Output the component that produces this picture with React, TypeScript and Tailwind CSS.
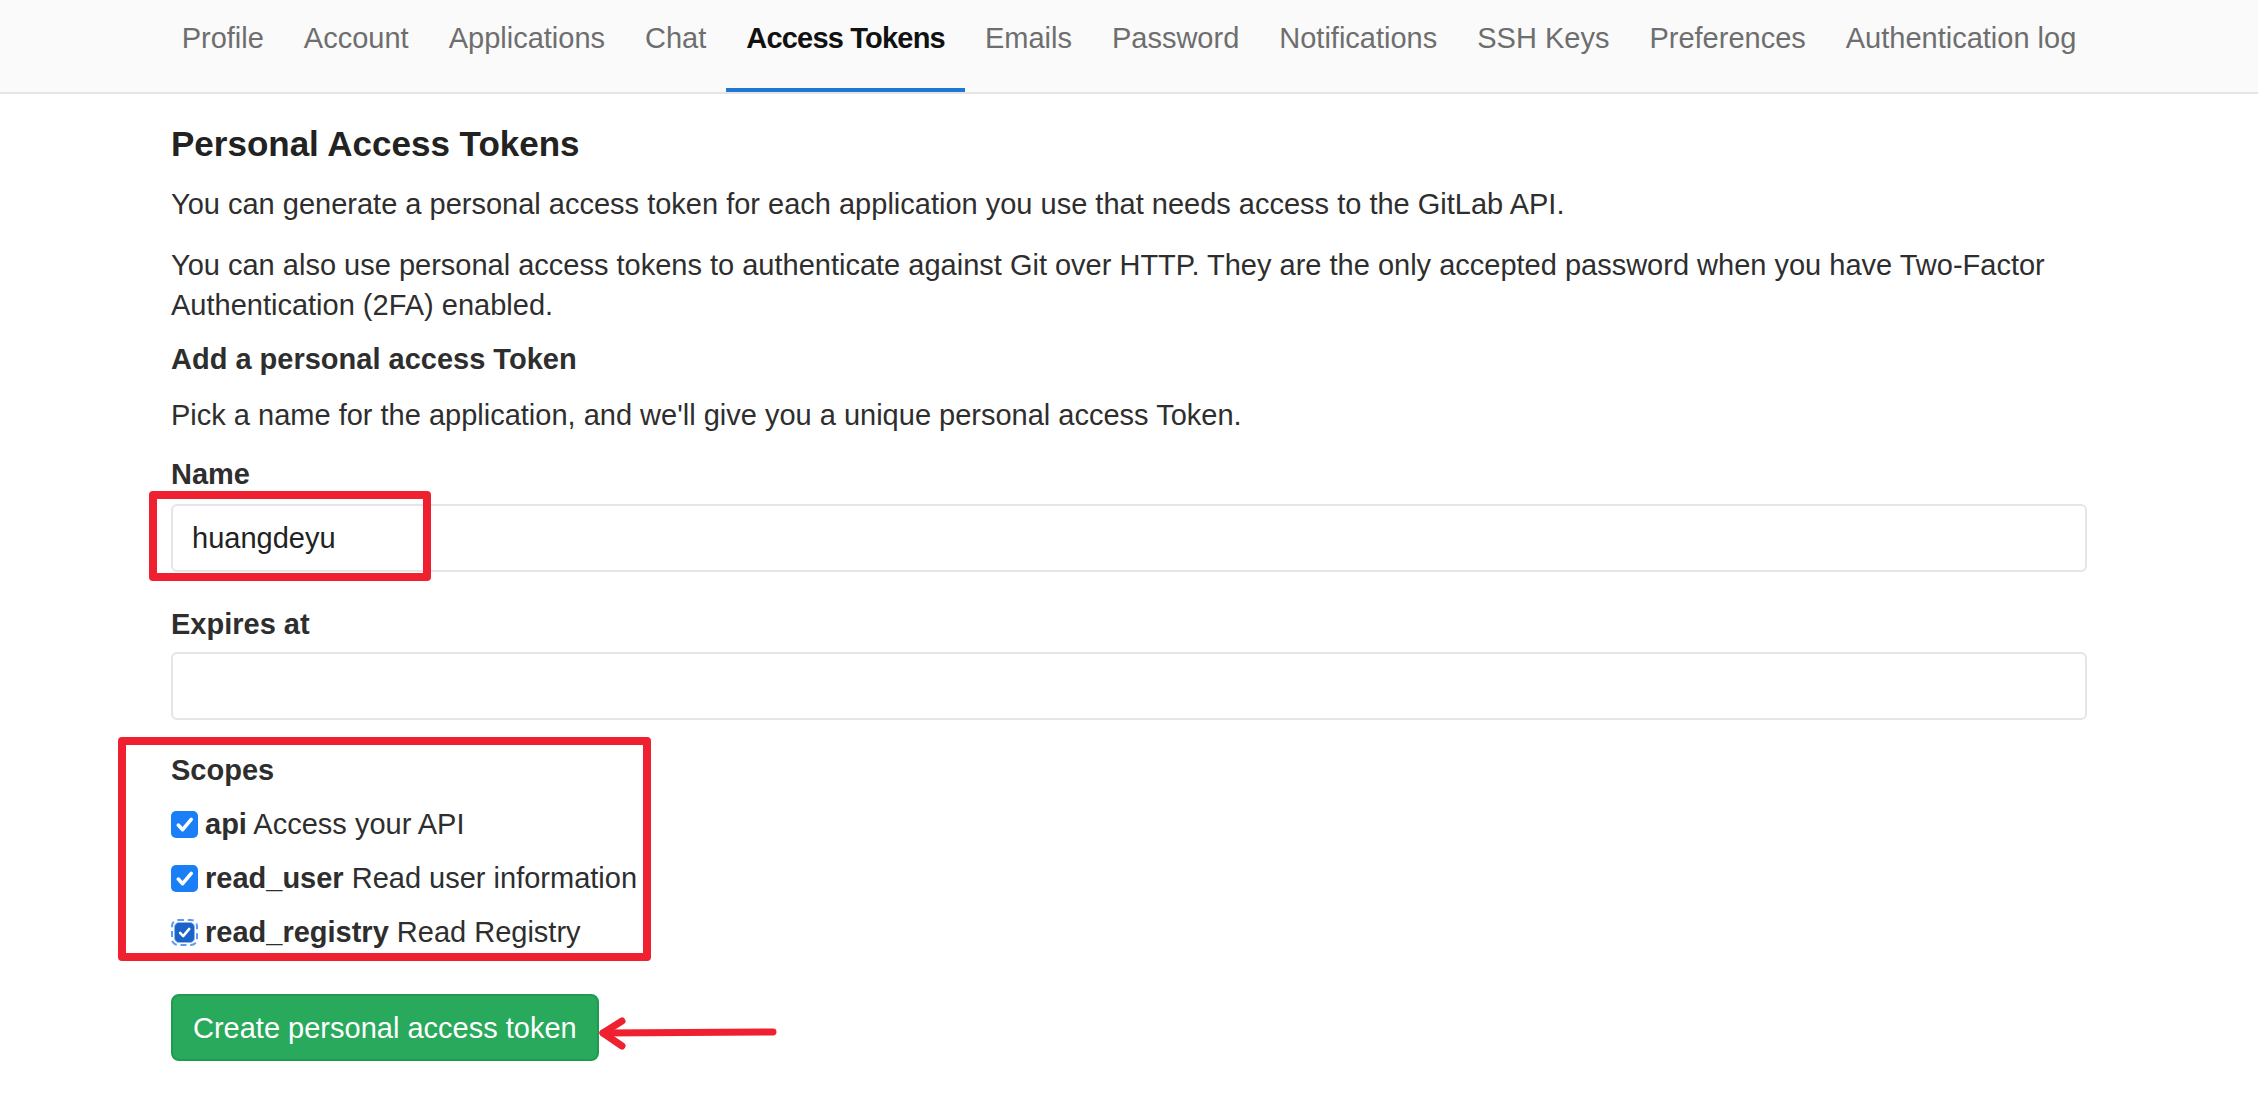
import React from "react";

const navItems = [
  "Profile",
  "Account",
  "Applications",
  "Chat",
  "Access Tokens",
  "Emails",
  "Password",
  "Notifications",
  "SSH Keys",
  "Preferences",
  "Authentication log",
];

function Check() {
  return (
    <svg viewBox="0 0 26 26" className="w-full h-full">
      <path
        d="M7 13.5 L11.2 18 L19.5 8"
        fill="none"
        stroke="white"
        strokeWidth="3.4"
        strokeLinecap="round"
        strokeLinejoin="round"
      />
    </svg>
  );
}

function Box({ focused }: { focused?: boolean }) {
  if (focused) {
    return (
      <div className="w-[27px] h-[27px] shrink-0 rounded-[7px] border-2 border-dashed border-[#5b9cf0] p-[1px]">
        <div className="w-full h-full rounded-[5px] bg-[#1b63c9] border border-[#8db8f2]">
          <Check />
        </div>
      </div>
    );
  }
  return (
    <div className="w-[27px] h-[27px] shrink-0 rounded-[5px] bg-[#1a7ff7]">
      <Check />
    </div>
  );
}

export default function App() {
  return (
    <div className="relative min-h-screen w-full bg-white font-['Liberation_Sans',Arial,sans-serif] text-[#2e2e2e]">
      <nav className="h-[94px] bg-[#fafafa] border-b-2 border-[#e5e5e5] flex justify-center">
        {navItems.map((n) => {
          const active = n === "Access Tokens";
          return (
            <div
              key={n}
              className={
                active
                  ? "h-[92px] px-[20px] pt-[18px] leading-[40px] text-[29px] font-bold text-[#111111] border-b-4 border-[#1f78d1] tracking-[-0.8px]"
                  : "h-[92px] px-[20px] pt-[18px] leading-[40px] text-[29px] text-[#6e6e6e]"
              }
            >
              {n}
            </div>
          );
        })}
      </nav>

      <main className="w-[1916px] mx-auto text-[29px] leading-[40px]">
        <h4 className="mt-[28px] text-[35px] leading-[44px] font-bold text-[#222222]">
          Personal Access Tokens
        </h4>
        <p className="mt-[18px]">
          You can generate a personal access token for each application you use that needs access to the GitLab API.
        </p>
        <p className="mt-[21px]">
          You can also use personal access tokens to authenticate against Git over HTTP. They are the only accepted password when you have Two-Factor
          <br />
          Authentication (2FA) enabled.
        </p>
        <p className="mt-[14px] font-bold">Add a personal access Token</p>
        <p className="mt-[16px]">
          Pick a name for the application, and we'll give you a unique personal access Token.
        </p>

        <div className="mt-[19px] font-bold">Name</div>
        <div className="mt-[10px] h-[68px] border-2 border-[#e5e5e5] rounded-[6px] flex items-center px-[19px] text-[#222222]">
          huangdeyu
        </div>

        <div className="mt-[32px] font-bold">Expires at</div>
        <div className="mt-[8px] h-[68px] border-2 border-[#e5e5e5] rounded-[6px]" />

        <div className="mt-[30px] font-bold">Scopes</div>
        <div className="mt-[7px] flex flex-col">
          <div className="h-[54px] flex items-center gap-[7px]">
            <Box />
            <span>
              <b>api</b> Access your API
            </span>
          </div>
          <div className="h-[54px] flex items-center gap-[7px]">
            <Box />
            <span>
              <b>read_user</b> Read user information
            </span>
          </div>
          <div className="h-[54px] flex items-center gap-[7px]">
            <Box focused />
            <span>
              <b>read_registry</b> Read Registry
            </span>
          </div>
        </div>

        <button className="mt-[35px] h-[67px] px-[20px] rounded-[8px] bg-[#28a95b] border-2 border-[#1f9a50] text-white text-[29px]">
          Create personal access token
        </button>
        <div className="h-[40px]" />
      </main>

      {/* annotations */}
      <div className="absolute left-[149px] top-[491px] w-[282px] h-[90px] border-[8px] border-[#ef2130] rounded-[4px]" />
      <div className="absolute left-[118px] top-[737px] w-[533px] h-[224px] border-[8px] border-[#ef2130] rounded-[4px]" />
      <svg className="absolute left-[595px] top-[1012px]" width="190" height="45" viewBox="0 0 190 45">
        <path d="M178 20 L8 21" stroke="#ef2130" strokeWidth="7" strokeLinecap="round" fill="none" />
        <path d="M27 9 L8 21 L27 34" stroke="#ef2130" strokeWidth="7" strokeLinecap="round" strokeLinejoin="round" fill="none" />
      </svg>
    </div>
  );
}
